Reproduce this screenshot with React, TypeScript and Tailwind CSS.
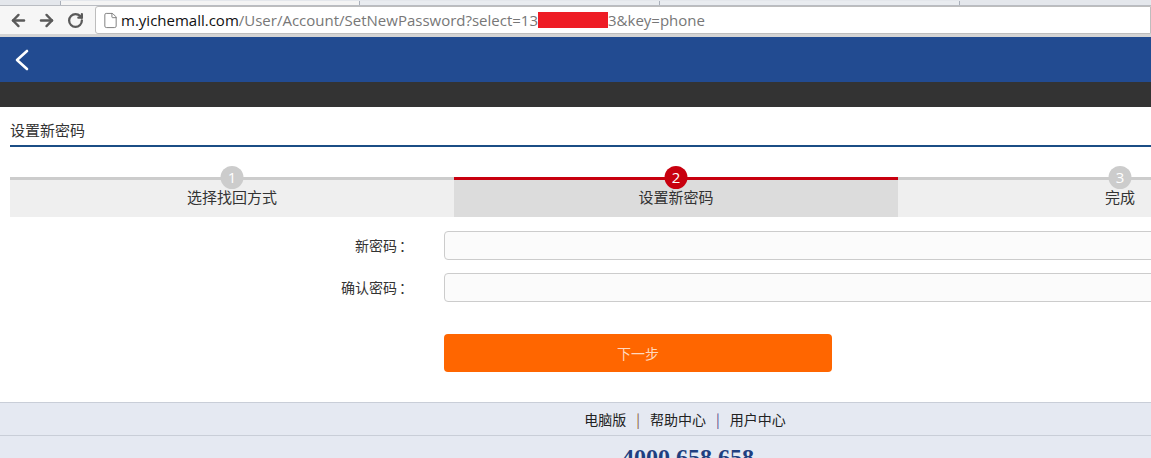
import { ArrowLeft, ArrowRight, RotateCw, File } from "lucide-react";

const steps = [
  { n: 1, label: "选择找回方式", active: false },
  { n: 2, label: "设置新密码", active: true },
  { n: 3, label: "完成", active: false },
];

const cjk = { fontFamily: '"Noto Sans CJK SC", "Noto Sans", sans-serif' };

const BrowserBar = () => (
  <div className="w-full">
    <div className="h-[6px] bg-[#e4e7ec] flex items-end border-b border-[#b9bcc2]">
      <div className="w-[60px]" />
      <div className="w-[300px] h-[4px] border-x border-[#aab0ba] bg-[#f4f4f4]" />
      <div className="w-[300px] h-[4px] border-r border-[#aab0ba] bg-[#e9ecf0]" />
      <div className="w-[300px] h-[4px] border-r border-[#aab0ba] bg-[#e9ecf0]" />
    </div>
    <div className="h-[31px] bg-[#f6f6f6] flex items-center border-b-[3px] border-[#d4d4d4]">
      <div className="flex items-center text-[#5a5a5a] pl-[9px] gap-[9px]">
        <ArrowLeft size={19} strokeWidth={3} />
        <ArrowRight size={19} strokeWidth={3} />
        <RotateCw size={17} strokeWidth={3.2} className="ml-[2px]" />
      </div>
      <div className="ml-[11px] flex-1 h-[28px] bg-white border border-[#bdbdbd] rounded-l-[3px] flex items-center pl-[6px]">
        <File size={17} strokeWidth={1.3} className="text-[#777]" />
        <div
          className="ml-[2px] text-[15px] flex items-center whitespace-nowrap"
          style={{ fontFamily: '"Open Sans", "Liberation Sans", sans-serif' }}
        >
          <span className="text-[#111]">m.yichemall.com</span>
          <span className="text-[#777]">/User/Account/SetNewPassword?select=13</span>
          <span className="inline-block w-[70px] h-[16px] bg-[#ee1c25]" />
          <span className="text-[#777]">3&amp;key=phone</span>
        </div>
      </div>
    </div>
  </div>
);

const Steps = () => (
  <div className="flex mt-[30px]">
    {steps.map((s) => (
      <div
        key={s.n}
        className={`relative w-[444px] h-[40px] border-t-[3px] ${
          s.active ? "border-[#c8000f] bg-[#dcdcdc]" : "border-[#cccccc] bg-[#efefef]"
        }`}
      >
        <div
          className={`absolute left-1/2 -translate-x-1/2 top-[-14px] w-[23px] h-[23px] rounded-full flex items-center justify-center text-white text-[15px] ${
            s.active ? "bg-[#c8000f]" : "bg-[#cccccc]"
          }`}
          style={{ fontFamily: '"Open Sans", sans-serif' }}
        >
          {s.n}
        </div>
        <div className="pt-[7px] text-center text-[15px] leading-[20px] text-[#333]">
          {s.label}
        </div>
      </div>
    ))}
  </div>
);

const Field = ({ label }: { label: string }) => (
  <div className="flex items-center">
    <div className="w-[387px] text-right text-[14px] text-[#333]">{label}</div>
    <div className="w-[18px] text-center text-[14px] text-[#333]">：</div>
    <input
      type="password"
      className="ml-[29px] flex-1 h-[29px] border border-[#cccccc] rounded-[4px] bg-[#fbfbfb] outline-none"
    />
  </div>
);

export default function App() {
  return (
    <div className="w-[1151px] h-[458px] overflow-hidden bg-white" style={cjk}>
      <BrowserBar />
      <div className="w-[1352px]">
        <div className="h-[45px] bg-[#224b91] flex items-center pl-[14px]">
          <svg width="16" height="22" viewBox="0 0 16 22" fill="none">
            <polyline
              points="13,2 3,11 13,20"
              stroke="white"
              strokeWidth="2.6"
              strokeLinecap="round"
              strokeLinejoin="round"
            />
          </svg>
        </div>
        <div className="h-[25px] bg-[#333333]" />
        <div className="px-[10px]">
          <div className="pt-[13px] pb-[5px] text-[15px] leading-[20px] text-[#333] border-b-2 border-[#1b4d85]">
            设置新密码
          </div>
          <Steps />
          <div className="mt-[14px] flex flex-col gap-[13px]">
            <Field label="新密码" />
            <Field label="确认密码" />
          </div>
          <div className="mt-[32px] pl-[434px]">
            <button className="w-[388px] h-[38px] bg-[#ff6600] rounded-[4px] text-[14px] text-[#ffd9bf]">
              下一步
            </button>
          </div>
        </div>
        <div className="mt-[30px] bg-[#e5e9f2] border-t border-[#c9ced8]">
          <div className="h-[33px] flex items-center justify-center text-[14px] text-[#222] border-b border-[#c9ced8] pl-[18px]">
            <span>电脑版</span>
            <span className="mx-[10px] text-[#8a5a3a]">|</span>
            <span>帮助中心</span>
            <span className="mx-[10px] text-[#5a4a8a]">|</span>
            <span>用户中心</span>
          </div>
          <div
            className="pt-[6px] text-center text-[24px] leading-[30px] font-bold text-[#1f3f80] pl-[24px]"
            style={{ fontFamily: '"Liberation Serif", serif' }}
          >
            4000 658 658
          </div>
        </div>
      </div>
    </div>
  );
}
